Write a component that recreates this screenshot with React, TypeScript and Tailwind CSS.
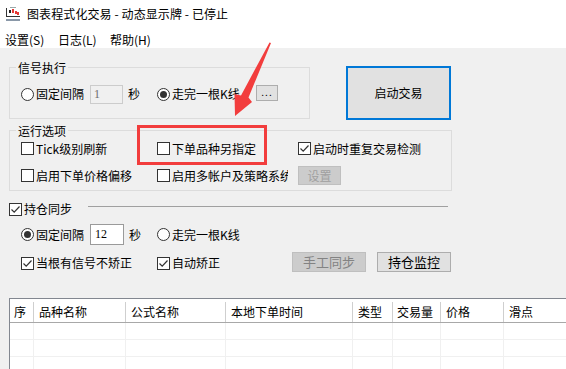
import React from "react";

const FONT = "font-['Noto_Sans_CJK_SC','Microsoft_YaHei',sans-serif]";

function Radio({ checked }: { checked?: boolean }) {
  return (
    <span className="w-[13px] h-[13px] shrink-0 rounded-full border border-[#333] bg-white flex items-center justify-center">
      {checked && <span className="w-[7px] h-[7px] rounded-full bg-[#333]" />}
    </span>
  );
}

function Check({ checked }: { checked?: boolean }) {
  return (
    <span className="w-[13px] h-[13px] shrink-0 border border-[#333] bg-white flex items-center justify-center">
      {checked && (
        <svg width="11" height="11" viewBox="0 0 11 11">
          <path d="M1.5 5.5 L4.2 8.2 L9.5 2.5" fill="none" stroke="#333" strokeWidth="1.2" />
        </svg>
      )}
    </span>
  );
}

function Label({ children, w }: { children: React.ReactNode; w?: string }) {
  return <span className={`ml-[2px] whitespace-nowrap leading-[16px] ${w ?? ""}`}>{children}</span>;
}

function AppIcon() {
  return (
    <svg width="17" height="16" viewBox="0 0 17 16">
      <rect x="1" y="2" width="1" height="9" fill="#333" />
      <rect x="1" y="10" width="14" height="1" fill="#333" />
      <rect x="4" y="4" width="2" height="3" fill="#222" />
      <rect x="7" y="3" width="2" height="4" fill="#e53935" />
      <rect x="10" y="5" width="2" height="3" fill="#e53935" />
      <rect x="12" y="6" width="2" height="3" fill="#e53935" />
      <rect x="5" y="1" width="6" height="1" fill="#9aa" />
      <rect x="1" y="13" width="14" height="2" fill="#8a98a8" />
    </svg>
  );
}

const cols = [
  { t: "序", w: "w-[24px]", p: "pl-[4px]" },
  { t: "品种名称", w: "w-[92px]", p: "pl-[5px]" },
  { t: "公式名称", w: "w-[100px]", p: "pl-[5px]" },
  { t: "本地下单时间", w: "w-[127px]", p: "pl-[5px]" },
  { t: "类型", w: "w-[40px]", p: "pl-[5px]" },
  { t: "交易量", w: "w-[48px]", p: "pl-[4px]" },
  { t: "价格", w: "w-[63px]", p: "pl-[5px]" },
  { t: "滑点", w: "w-[90px]", p: "pl-[5px]" },
];

export default function App() {
  return (
    <div className={`w-[566px] h-[369px] overflow-hidden relative bg-[#f0f0f0] text-[12px] text-black ${FONT}`}>
      {/* title */}
      <div className="h-[29px] bg-white flex items-center pl-[5px] pb-[1px]">
        <AppIcon />
        <span className="ml-[5px] text-[12px] tracking-[0.1px]">图表程式化交易 - 动态显示牌 - 已停止</span>
      </div>
      {/* menu */}
      <div className="h-[19px] bg-white flex items-center text-[12px] pt-[2px]">
        <span className="ml-[5px] w-[53px]">设置(S)</span>
        <span className="w-[52px]">日志(L)</span>
        <span>帮助(H)</span>
      </div>

      {/* signal + start button */}
      <div className="flex items-start mt-[18px]">
        <div className="ml-[9px] mt-[1px] w-[301px] h-[52px] border border-[#dcdcdc] relative">
          <span className="absolute top-[-7px] left-[6px] px-[2px] bg-[#f0f0f0] leading-[14px] text-[12px]">信号执行</span>
          <div className="flex items-center h-[20px] mt-[16px] pl-[11px]">
            <Radio />
            <Label w="w-[48px]">固定间隔</Label>
            <span className="ml-[6px] w-[33px] h-[19px] border border-[#cccccc] bg-[#f0f0f0] text-[#6d6d6d] pl-[3px] leading-[17px] font-['Liberation_Serif',serif]">1</span>
            <span className="ml-[5px] w-[29px]">秒</span>
            <Radio checked />
            <Label w="w-[84px]">走完一根K线</Label>
            <span className="w-[22px] h-[16px] mt-[-3px] border border-[#adadad] bg-[#e1e1e1] flex items-center justify-center text-[10px] tracking-[1px] leading-none pb-[2px]">...</span>
          </div>
        </div>
        <button className="ml-[36px] w-[105px] h-[54px] border-2 border-[#0078d7] bg-[#e1e1e1] text-[12px] flex items-center justify-center">
          启动交易
        </button>
      </div>

      {/* run options */}
      <div className="ml-[9px] mt-[10px] w-[443px] h-[61px] border border-[#dcdcdc] relative">
        <span className="absolute top-[-7px] left-[6px] px-[2px] bg-[#f0f0f0] leading-[14px] text-[12px]">运行选项</span>
        <div className="flex flex-col gap-[8px] pt-[8px] pl-[11px]">
          <div className="flex items-center h-[19px]">
            <div className="flex items-center w-[136px]"><Check /><Label>Tick级别刷新</Label></div>
            <div className="flex items-center w-[141px]"><Check /><Label>下单品种另指定</Label></div>
            <div className="flex items-center"><Check checked /><Label>启动时重复交易检测</Label></div>
          </div>
          <div className="flex items-center h-[19px]">
            <div className="flex items-center w-[136px]"><Check /><Label>启用下单价格偏移</Label></div>
            <div className="flex items-center w-[141px]">
              <Check />
              <Label w="w-[116px] overflow-hidden">启用多帐户及策略系统</Label>
            </div>
            <span className="w-[43px] h-[19px] border border-[#bfbfbf] bg-[#cccccc] text-[#a0a0a0] flex items-center justify-center">设置</span>
          </div>
        </div>
      </div>

      {/* position sync */}
      <div className="flex items-start ml-[9px] mt-[10px] h-[16px]">
        <span className="mt-[2px]"><Check checked /></span>
        <Label w="w-[48px]">持仓同步</Label>
        <span className="ml-[16px] mt-[5px] w-[360px] h-px bg-[#a0a0a0]" />
      </div>
      <div className="flex items-center h-[21px] mt-[7px] pl-[21px]">
        <Radio checked />
        <Label w="w-[48px]">固定间隔</Label>
        <span className="ml-[6px] w-[34px] h-[21px] border border-[#9a9a9a] bg-white pl-[4px] leading-[19px] font-['Liberation_Serif',serif]">12</span>
        <span className="ml-[5px] w-[28px]">秒</span>
        <Radio />
        <Label>走完一根K线</Label>
      </div>
      <div className="flex items-center h-[20px] mt-[7px] pl-[21px]">
        <div className="flex items-center w-[136px] mt-[2px]"><Check checked /><Label>当根有信号不矫正</Label></div>
        <div className="flex items-center w-[135px] mt-[2px]"><Check checked /><Label>自动矫正</Label></div>
        <span className="w-[74px] h-[20px] border border-[#bfbfbf] bg-[#cccccc] text-[#838383] text-[13px] flex items-center justify-center">手工同步</span>
        <span className="ml-[11px] w-[74px] h-[20px] border border-[#adadad] bg-[#e1e1e1] text-[13px] flex items-center justify-center">持仓监控</span>
      </div>

      {/* table */}
      <div className="ml-[9px] mt-[26px] w-[600px] h-[80px] border-l border-t border-[#828790] bg-white">
        <div className="flex h-[24px] border-b border-[#a8a8a8]">
          {cols.map((c) => (
            <div key={c.t} className={`${c.w} ${c.p} shrink-0 mt-[3px] h-[20px] border-r border-[#cfcfcf] flex items-center whitespace-nowrap`}>
              {c.t}
            </div>
          ))}
        </div>
        {[0, 1, 2].map((r) => (
          <div key={r} className="flex h-[17px] border-b border-[#f0f0f0]">
            {cols.map((c) => (
              <div key={c.t} className={`${c.w} shrink-0 border-r border-[#f0f0f0]`} />
            ))}
          </div>
        ))}
      </div>

      {/* annotation */}
      <div className="absolute left-[137px] top-[125px] w-[130px] h-[40px] border-[3px] border-[#f23d3d] pointer-events-none" />
      <svg className="absolute left-0 top-0 pointer-events-none" width="566" height="369">
        <polygon
          points="271,43 248.5,97.5 252,102 235,116 234.5,94 241,95.5 269.5,42.5"
          fill="#f23d3d"
        />
      </svg>
    </div>
  );
}
